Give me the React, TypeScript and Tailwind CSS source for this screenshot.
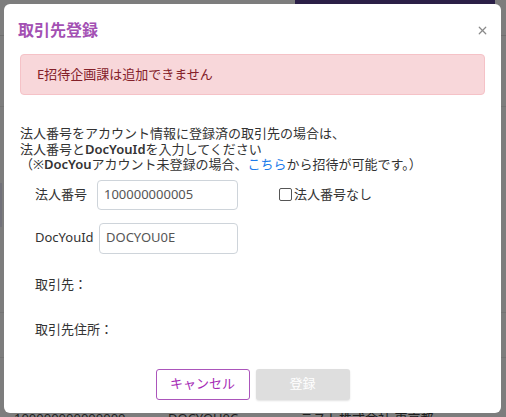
import { X } from 'lucide-react'

const font = { fontFamily: '"Noto Sans", "Noto Sans CJK JP", sans-serif' }

function Backdrop() {
  return (
    <div className="h-full bg-[#7d7d7d]">
      <div className="flex h-[4px]">
        <div className="ml-[295px] w-[200px] bg-[#2b1f47]" />
      </div>
      <div className="mt-[31px] h-px bg-[#6f6f6f]" />
      <div className="mt-[70px] h-px bg-[#747474]" />
      <div className="mt-[76px] h-[44px] w-[2px] bg-[#72727a]" />
      <div className="mt-[85px] h-px bg-[#747474]" />
      <div className="mt-[44px] h-px bg-[#747474]" />
      <div className="mt-[53px] flex items-start text-[13px] leading-[15px] text-[#1e1e1e]">
        <span className="ml-[14px] w-[154px]">100000000000000</span>
        <span className="w-[132px]">DOCYOU0C</span>
        <span>テスト株式会社 東京都</span>
      </div>
    </div>
  )
}

export default function App() {
  return (
    <div className="relative h-[417px] w-[506px] overflow-hidden" style={font}>
      <Backdrop />

      <div className="absolute left-[4px] top-[4px] flex h-[409px] w-[497px] flex-col rounded-[6px] bg-white">
        <div className="mt-[16px] flex h-[20px] items-center justify-between pl-[14px] pr-[12px]">
          <h2 className="text-[16px] font-bold leading-[20px] text-[#a350b3]">取引先登録</h2>
          <X className="h-[13px] w-[13px] text-[#8a8a8a]" strokeWidth={2.2} />
        </div>

        <div className="mx-[16px] mt-[14px] flex h-[41px] items-center rounded-[4px] border border-[#f5c2c7] bg-[#f8d7da] px-[16px] text-[13px] text-[#842029]">
          E招待企画課は追加できません
        </div>

        <div className="mx-[16px] mt-[31px] text-[13px] leading-[15.5px] text-[#333]">
          <p>法人番号をアカウント情報に登録済の取引先の場合は、</p>
          <p>
            法人番号と<span className="font-semibold">DocYouId</span>を入力してください
          </p>
          <p>
            （※<span className="font-semibold">DocYou</span>アカウント未登録の場合、
            <span className="text-[#1d7bea]">こちら</span>から招待が可能です。）
          </p>
        </div>

        <div className="ml-[31px] mt-[7px] flex items-center text-[13px] text-[#333]">
          <span className="w-[62px]">法人番号</span>
          <div className="flex h-[30px] w-[141px] items-center rounded-[4px] border border-[#ced4da] px-[6px] text-[#555]">
            100000000005
          </div>
          <label className="ml-[41px] flex items-center gap-[2px]">
            <span className="h-[13px] w-[13px] rounded-[2px] border border-[#555] bg-white" />
            <span>法人番号なし</span>
          </label>
        </div>

        <div className="ml-[31px] mt-[13px] flex items-center text-[13px] text-[#333]">
          <span className="w-[64px]">DocYouId</span>
          <div className="flex h-[31px] w-[139px] items-center rounded-[4px] border border-[#ced4da] px-[6px] text-[#555]">
            DOCYOU0E
          </div>
        </div>

        <p className="ml-[31px] mt-[23px] text-[13px] leading-[15px] text-[#333]">取引先：</p>
        <p className="ml-[31px] mt-[30px] text-[13px] leading-[15px] text-[#333]">取引先住所：</p>

        <div className="mt-[32px] flex justify-center gap-[6px]">
          <button className="h-[31px] w-[94px] rounded-[3px] border border-[#ab55bb] bg-white text-[13px] text-[#a62bb6]">
            キャンセル
          </button>
          <button className="h-[31px] w-[94px] rounded-[3px] bg-[#dedede] text-[13px] text-white shadow-[0_1px_2px_rgba(0,0,0,0.12)]">
            登録
          </button>
        </div>
      </div>
    </div>
  )
}
